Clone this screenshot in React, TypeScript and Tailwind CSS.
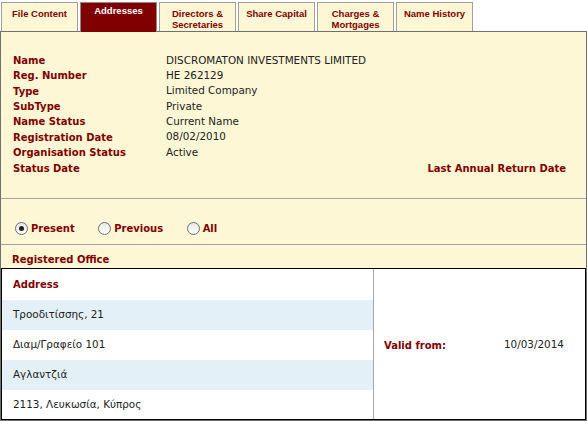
import React from "react"

const tabs = [
  { label: ["File Content"], active: false },
  { label: ["Addresses"], active: true },
  { label: ["Directors &", "Secretaries"], active: false },
  { label: ["Share Capital"], active: false },
  { label: ["Charges &", "Mortgages"], active: false },
  { label: ["Name History"], active: false },
]

const details = [
  { name: "Name", value: "DISCROMATON INVESTMENTS LIMITED" },
  { name: "Reg. Number", value: "HE 262129" },
  { name: "Type", value: "Limited Company" },
  { name: "SubType", value: "Private" },
  { name: "Name Status", value: "Current Name" },
  { name: "Registration Date", value: "08/02/2010" },
  { name: "Organisation Status", value: "Active" },
]

const addressLines = [
  "Τροοδιτίσσης, 21",
  "Διαμ/Γραφείο 101",
  "Αγλαντζιά",
  "2113, Λευκωσία, Κύπρος",
]

function Radio({ label, checked }: { label: string; checked?: boolean }) {
  return (
    <label className="flex items-center gap-[3px]">
      <span className="flex h-[13px] w-[13px] items-center justify-center rounded-full border border-[#6d6d6d] bg-gradient-to-b from-[#e8e8e8] to-white">
        {checked && <span className="h-[5px] w-[5px] rounded-full bg-[#222]" />}
      </span>
      <span className="font-bold text-[#800000]">{label}</span>
    </label>
  )
}

export default function App() {
  return (
    <div className="h-[421px] w-[587px] bg-white font-['DejaVu_Sans',Verdana,sans-serif] text-[10px] text-[#222]">
      {/* tab strip */}
      <div className="flex gap-[2px] pl-[1px] pt-[2px]">
        {tabs.map((tab) => (
          <div
            key={tab.label.join(" ")}
            className={
              tab.active
                ? "h-[30px] w-[77px] border border-b-0 border-[#8a8a8a] bg-[#800000] pt-[2px] text-center font-['Liberation_Sans',Arial,sans-serif] text-[9.5px] font-bold leading-[11px] text-white"
                : "h-[29px] w-[77px] border border-b-0 border-[#a0a0a0] bg-[#fdf7d6] pt-[5px] text-center font-['Liberation_Sans',Arial,sans-serif] text-[9.5px] font-bold leading-[11px] text-[#800000]"
            }
          >
            {tab.label.map((line) => (
              <div key={line}>{line}</div>
            ))}
          </div>
        ))}
      </div>

      {/* panel */}
      <div className="-mt-px h-[390px] border border-[#707070] bg-[#fdf7d6]">
        <div className="px-[12px] pt-[21px]">
          {details.map((row) => (
            <div key={row.name} className="flex h-[15.3px] items-center">
              <div className="w-[153px] font-bold text-[#800000]">{row.name}</div>
              <div className="text-[10.4px]">{row.value}</div>
            </div>
          ))}
          <div className="mt-[1px] flex h-[15px] items-center justify-between pr-[8px] font-bold text-[#800000]">
            <span>Status Date</span>
            <span>Last Annual Return Date</span>
          </div>
        </div>

        <div className="mt-[22px] h-[2px] border-t border-[#a3a3a3]" />

        <div className="flex h-[44px] items-center gap-[23.5px] pl-[14px] pt-[13px]">
          <Radio label="Present" checked />
          <Radio label="Previous" />
          <Radio label="All" />
        </div>

        <div className="h-px bg-[#a3a3a3]" />

        <div className="flex h-[23px] items-center pl-[11px] pt-[5px] font-bold text-[#800000]">
          Registered Office
        </div>

        {/* address table */}
        <div className="flex border-[1.5px] border-black bg-white">
          <div className="w-[372px] border-r border-[#a8a8a8]">
            <div className="flex h-[31px] items-center pl-[11px] font-bold text-[#800000]">Address</div>
            {addressLines.map((line, i) => (
              <div
                key={line}
                className={
                  i % 2 === 0
                    ? "flex h-[30px] items-center bg-[#e3f0f7] pl-[11px] text-[10.4px]"
                    : "flex h-[30px] items-center pl-[11px] text-[10.4px] last:h-[29px]"
                }
              >
                {line}
              </div>
            ))}
          </div>
          <div className="flex flex-1 items-center pl-[10px] pt-[2px]">
            <span className="w-[120px] font-bold text-[#800000]">Valid from:</span>
            <span className="text-[10.4px]">10/03/2014</span>
          </div>
        </div>
      </div>
    </div>
  )
}
